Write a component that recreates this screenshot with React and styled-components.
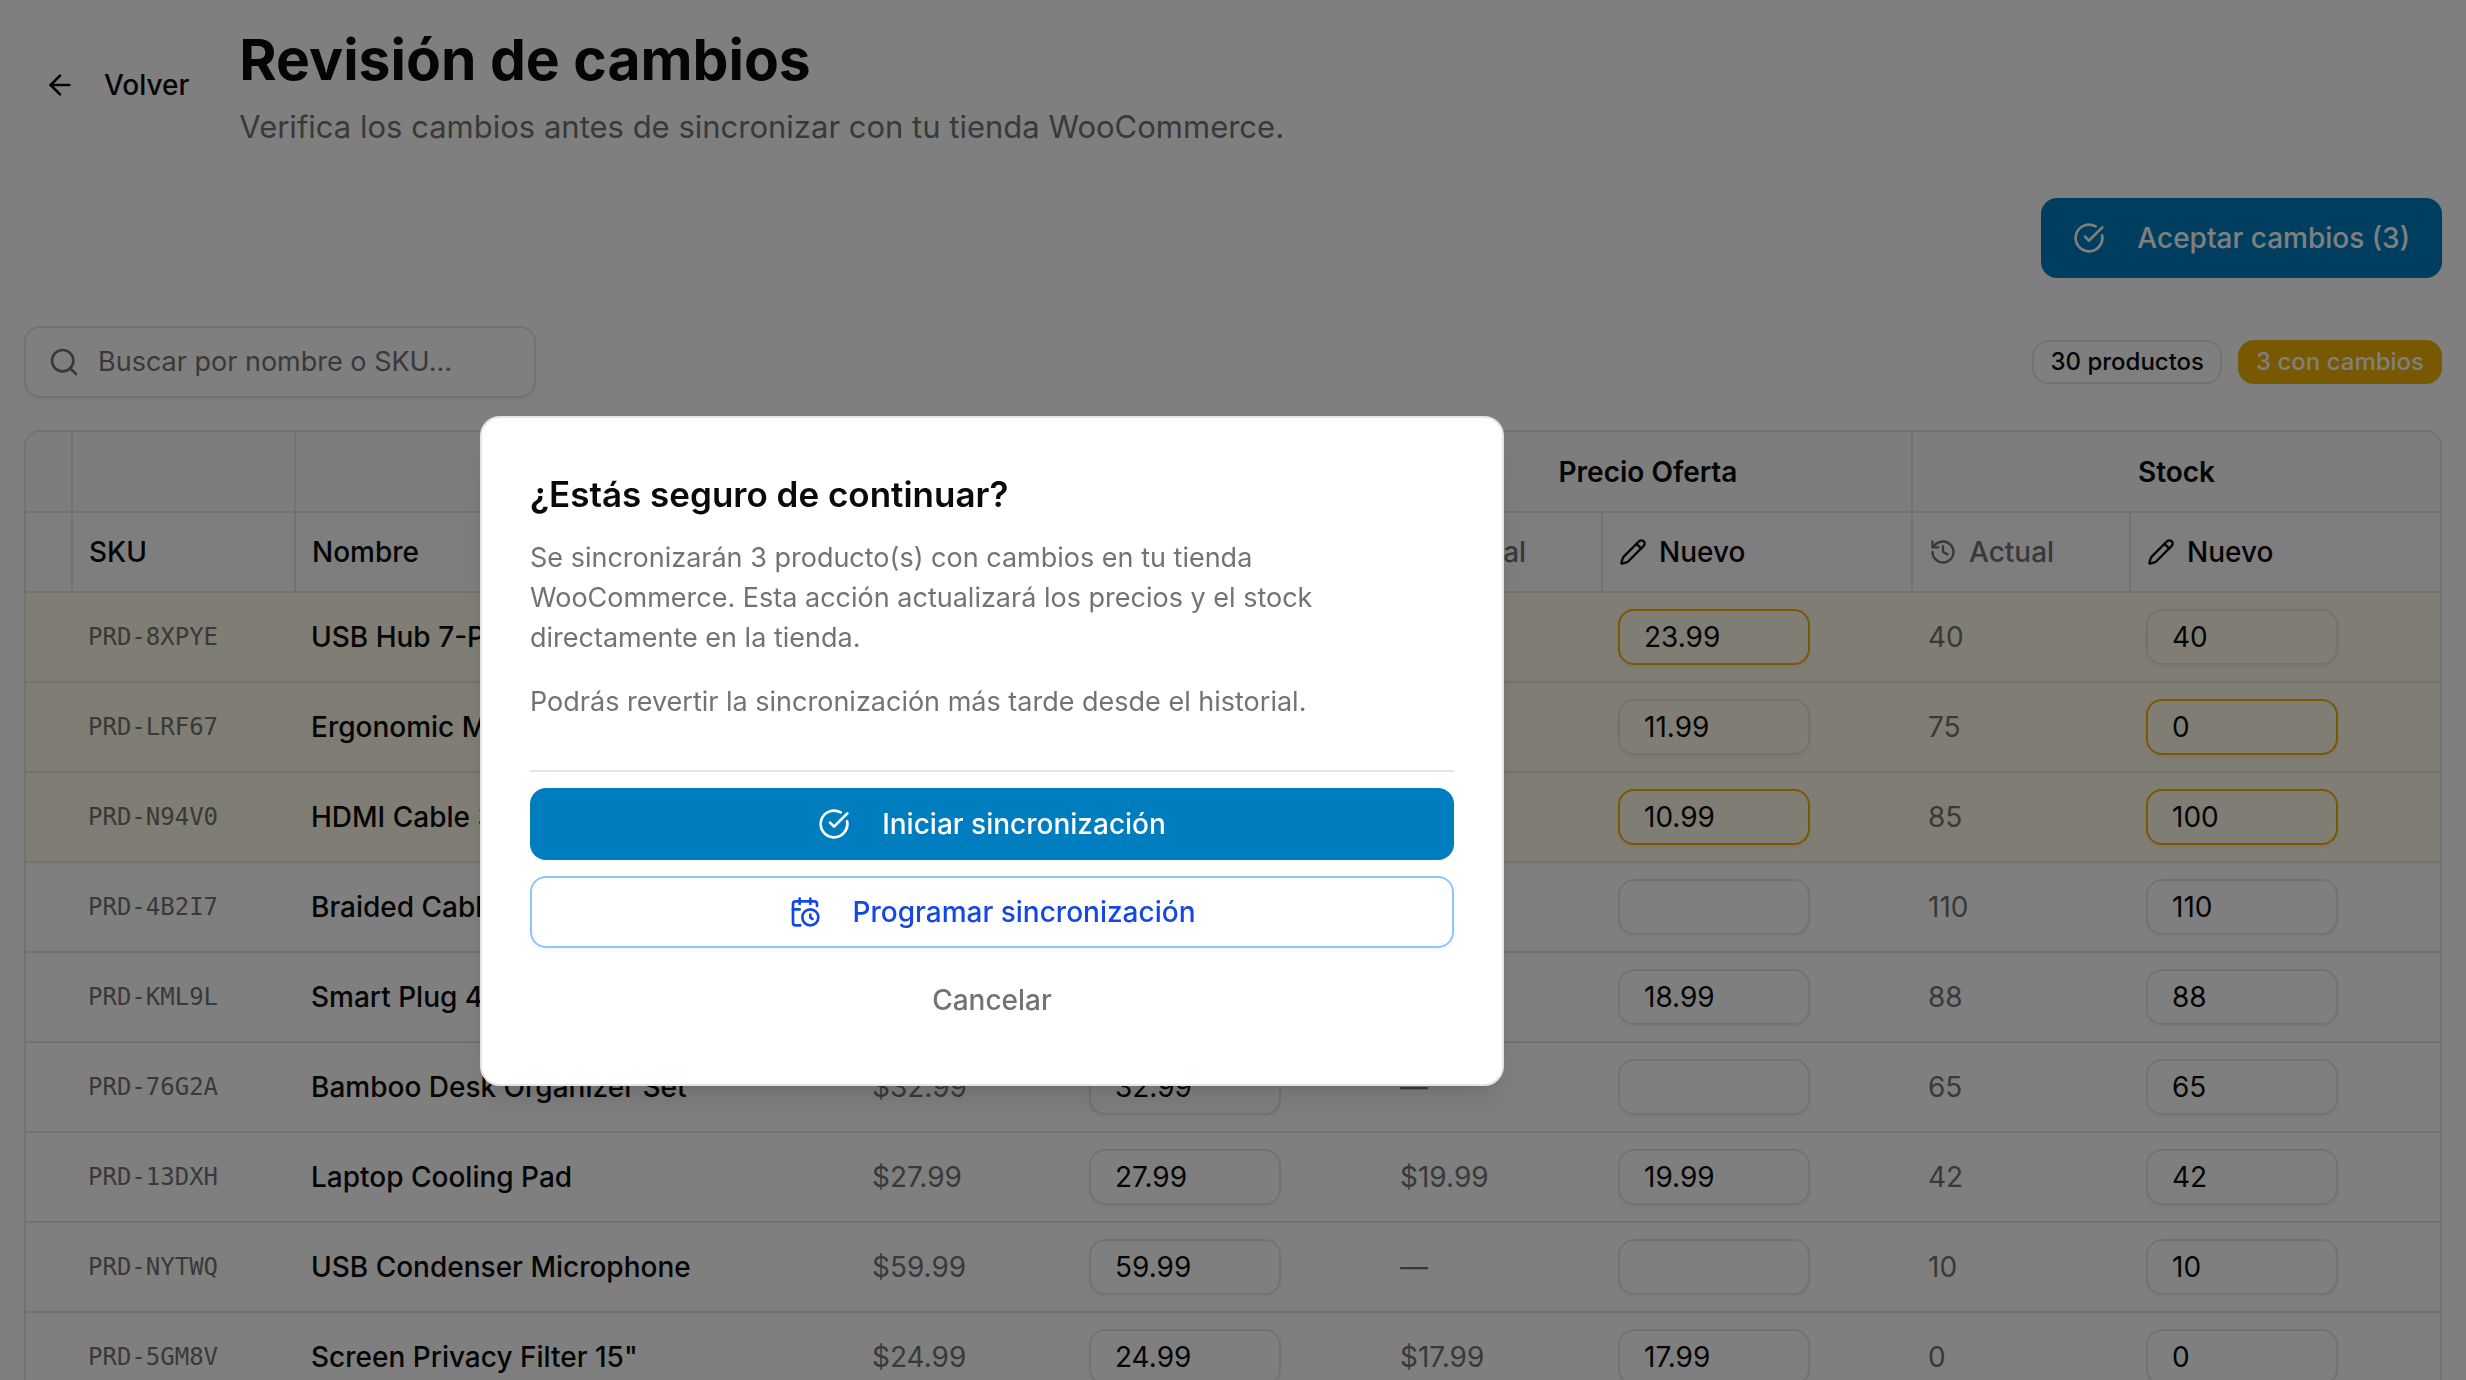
import styled, { createGlobalStyle, css } from 'styled-components';
import {
  ArrowLeft,
  CalendarClock,
  CircleCheckBig,
  History,
  Pencil,
  Search,
} from 'lucide-react';

const products = [
  { sku: 'PRD-8XPYE', name: 'USB Hub 7-Port', price: '34.99', newPrice: '34.99', offer: '24.99', newOffer: '23.99', stock: '40', newStock: '40' },
  { sku: 'PRD-LRF67', name: 'Ergonomic Mouse Pad', price: '14.99', newPrice: '14.99', offer: '11.99', newOffer: '11.99', stock: '75', newStock: '0' },
  { sku: 'PRD-N94V0', name: 'HDMI Cable 3m', price: '15.99', newPrice: '15.99', offer: '11.99', newOffer: '10.99', stock: '85', newStock: '100' },
  { sku: 'PRD-4B2I7', name: 'Braided Cable USB-C', price: '12.99', newPrice: '12.99', offer: '', newOffer: '', stock: '110', newStock: '110' },
  { sku: 'PRD-KML9L', name: 'Smart Plug 4-Pack', price: '24.99', newPrice: '24.99', offer: '18.99', newOffer: '18.99', stock: '88', newStock: '88' },
  { sku: 'PRD-76G2A', name: 'Bamboo Desk Organizer Set', price: '32.99', newPrice: '32.99', offer: '', newOffer: '', stock: '65', newStock: '65' },
  { sku: 'PRD-13DXH', name: 'Laptop Cooling Pad', price: '27.99', newPrice: '27.99', offer: '19.99', newOffer: '19.99', stock: '42', newStock: '42' },
  { sku: 'PRD-NYTWQ', name: 'USB Condenser Microphone', price: '59.99', newPrice: '59.99', offer: '', newOffer: '', stock: '10', newStock: '10' },
  { sku: 'PRD-5GM8V', name: 'Screen Privacy Filter 15"', price: '24.99', newPrice: '24.99', offer: '17.99', newOffer: '17.99', stock: '0', newStock: '0' },
];

const money = (value) => (value ? `$${value}` : '—');

function ColumnPair() {
  return (
    <>
      <HeadCell $muted>
        <HeadLabel>
          <History size={28} />
          Actual
        </HeadLabel>
      </HeadCell>
      <HeadCell>
        <HeadLabel>
          <Pencil size={28} />
          Nuevo
        </HeadLabel>
      </HeadCell>
    </>
  );
}

function ProductRow({ product }) {
  const priceChanged = product.price !== product.newPrice;
  const offerChanged = product.offer !== product.newOffer;
  const stockChanged = product.stock !== product.newStock;

  return (
    <Row $changed={priceChanged || offerChanged || stockChanged}>
      <Cell />
      <SkuCell>{product.sku}</SkuCell>
      <NameCell>{product.name}</NameCell>
      <MutedCell>{money(product.price)}</MutedCell>
      <Cell>
        <CellInput $changed={priceChanged} defaultValue={product.newPrice} aria-label={`Nuevo precio de ${product.name}`} />
      </Cell>
      <MutedCell>{money(product.offer)}</MutedCell>
      <Cell>
        <CellInput $changed={offerChanged} defaultValue={product.newOffer} aria-label={`Nueva oferta de ${product.name}`} />
      </Cell>
      <MutedCell>{product.stock}</MutedCell>
      <Cell>
        <CellInput $changed={stockChanged} defaultValue={product.newStock} aria-label={`Nuevo stock de ${product.name}`} />
      </Cell>
    </Row>
  );
}

export default function App() {
  return (
    <>
      <GlobalStyle />
      <Page>
        <Header>
          <BackButton type="button">
            <ArrowLeft size={32} />
            Volver
          </BackButton>
          <div>
            <Title>Revisión de cambios</Title>
            <Subtitle>
              Verifica los cambios antes de sincronizar con tu tienda WooCommerce.
            </Subtitle>
          </div>
        </Header>

        <Actions>
          <AcceptButton type="button">
            <CircleCheckBig size={32} />
            Aceptar cambios (3)
          </AcceptButton>
        </Actions>

        <Toolbar>
          <SearchBox>
            <Search size={32} />
            <SearchInput type="search" placeholder="Buscar por nombre o SKU..." aria-label="Buscar por nombre o SKU" />
          </SearchBox>
          <Badges>
            <Badge>30 productos</Badge>
            <Badge $warning>3 con cambios</Badge>
          </Badges>
        </Toolbar>

        <TableWrap>
          <Table>
            <colgroup>
              <Col $width={47} />
              <Col $width={223} />
              <col />
              <Col $width={217} />
              <Col $width={311} />
              <Col $width={218} />
              <Col $width={310} />
              <Col $width={218} />
              <Col $width={309} />
            </colgroup>
            <thead>
              <tr>
                <GroupCell />
                <GroupCell />
                <GroupCell />
                <GroupCell colSpan={2}>Precio Regular</GroupCell>
                <GroupCell colSpan={2}>Precio Oferta</GroupCell>
                <GroupCell colSpan={2}>Stock</GroupCell>
              </tr>
              <tr>
                <HeadCell />
                <HeadCell>SKU</HeadCell>
                <HeadCell>Nombre</HeadCell>
                <ColumnPair />
                <ColumnPair />
                <ColumnPair />
              </tr>
            </thead>
            <tbody>
              {products.map((product) => (
                <ProductRow key={product.sku} product={product} />
              ))}
            </tbody>
          </Table>
        </TableWrap>
      </Page>

      <Overlay>
        <Dialog role="alertdialog" aria-modal="true" aria-labelledby="dialog-title">
          <DialogTitle id="dialog-title">¿Estás seguro de continuar?</DialogTitle>
          <DialogText>
            <p>
              Se sincronizarán 3 producto(s) con cambios en tu tienda
              WooCommerce. Esta acción actualizará los precios y el stock
              directamente en la tienda.
            </p>
            <p>Podrás revertir la sincronización más tarde desde el historial.</p>
          </DialogText>
          <DialogFooter>
            <PrimaryButton type="button">
              <CircleCheckBig size={32} />
              Iniciar sincronización
            </PrimaryButton>
            <OutlineButton type="button">
              <CalendarClock size={32} />
              Programar sincronización
            </OutlineButton>
            <GhostButton type="button">Cancelar</GhostButton>
          </DialogFooter>
        </Dialog>
      </Overlay>
    </>
  );
}

const colors = {
  text: '#0a0a0a',
  muted: '#737373',
  border: '#e5e5e5',
  primary: '#007dbf',
  yellow: '#f0b100',
};

const GlobalStyle = createGlobalStyle`
  * {
    box-sizing: border-box;
  }
  body {
    margin: 0;
    background: #fff;
    color: ${colors.text};
    font-family: Inter, 'Liberation Sans', sans-serif;
    font-size: 28px;
    line-height: 40px;
  }
  h1, h2, p {
    margin: 0;
  }
  button, input {
    font: inherit;
    color: inherit;
  }
  svg {
    flex-shrink: 0;
  }
`

const Page = styled.main`
  display: flex;
  flex-direction: column;
  height: 100vh;
  padding: 20px 24px 0;
  overflow: hidden;
`

const Header = styled.header`
  display: flex;
  align-items: center;
  gap: 30px;
`

const Button = styled.button`
  display: inline-flex;
  align-items: center;
  justify-content: center;
  gap: 32px;
  height: 72px;
  padding: 0 32px;
  border: 0;
  border-radius: 16px;
  background: transparent;
  font-weight: 500;
  white-space: nowrap;
  cursor: pointer;
`

const BackButton = styled(Button)`
  gap: 28px;
  height: 64px;
  padding: 0 20px;
`

const Title = styled.h1`
  font-size: 57px;
  line-height: 80px;
  font-weight: 700;
`

const Subtitle = styled.p`
  margin-top: 4px;
  font-size: 31px;
  line-height: 46px;
  color: ${colors.muted};
`

const Actions = styled.div`
  display: flex;
  justify-content: flex-end;
  margin-top: 48px;
`

const PrimaryButton = styled(Button)`
  background: ${colors.primary};
  color: #fff;
`

const AcceptButton = styled(PrimaryButton)`
  height: 80px;
`

const Toolbar = styled.div`
  display: flex;
  align-items: center;
  justify-content: space-between;
  margin-top: 48px;
`

const SearchBox = styled.label`
  display: flex;
  align-items: center;
  gap: 18px;
  width: 512px;
  height: 72px;
  padding: 0 22px;
  border: 2px solid ${colors.border};
  border-radius: 16px;
  box-shadow: 0 2px 4px rgba(0, 0, 0, 0.05);
  color: ${colors.muted};
`

const SearchInput = styled.input`
  flex: 1;
  min-width: 0;
  padding: 0;
  border: 0;
  outline: 0;
  background: transparent;
  font-size: 27px;
  &::placeholder {
    color: ${colors.muted};
    opacity: 1;
  }
`

const Badges = styled.div`
  display: flex;
  gap: 16px;
`

const Badge = styled.span`
  height: 44px;
  padding: 4px 16px;
  border: 2px solid ${props => props.$warning ? colors.yellow : colors.border};
  border-radius: 16px;
  background: ${props => props.$warning ? colors.yellow : 'transparent'};
  color: ${props => props.$warning ? '#fff' : colors.text};
  font-size: 24px;
  line-height: 32px;
  font-weight: 500;
`

const TableWrap = styled.div`
  flex-shrink: 0;
  margin-top: 32px;
  border: 2px solid ${colors.border};
  border-radius: 16px;
  overflow: hidden;
`

const Table = styled.table`
  width: 100%;
  table-layout: fixed;
  border-collapse: separate;
  border-spacing: 0;
`

const Col = styled.col`
  width: ${props => props.$width}px;
`

const headBase = css`
  height: 80px;
  padding: 0 16px;
  border-right: 2px solid ${colors.border};
  border-bottom: 2px solid ${colors.border};
  white-space: nowrap;
  &:last-child {
    border-right: 0;
  }
`

const GroupCell = styled.th`
  ${headBase}
  height: 81px;
  background: #fafafa;
  font-weight: 600;
  text-align: center;
`

const HeadCell = styled.th`
  ${headBase}
  background: #fdfdfd;
  color: ${props => props.$muted ? colors.muted : colors.text};
  font-weight: 500;
  text-align: left;
`

const HeadLabel = styled.span`
  display: flex;
  align-items: center;
  gap: 12px;
`

const Row = styled.tr`
  background: ${props => props.$changed ? '#fefae8' : 'transparent'};
`

const Cell = styled.td`
  height: 90px;
  padding: 0 15px;
  border-bottom: 2px solid ${colors.border};
  white-space: nowrap;
`

const SkuCell = styled(Cell)`
  color: ${colors.muted};
  font-family: 'DejaVu Sans Mono', monospace;
  font-size: 24px;
`

const NameCell = styled(Cell)`
  font-weight: 500;
`

const MutedCell = styled(Cell)`
  color: ${colors.muted};
`

const CellInput = styled.input`
  display: block;
  width: 192px;
  height: 56px;
  padding: 0 24px;
  border: 2px solid ${props => props.$changed ? colors.yellow : colors.border};
  border-radius: 16px;
  background: transparent;
  box-shadow: 0 2px 4px rgba(0, 0, 0, 0.05);
`

const Overlay = styled.div`
  position: fixed;
  inset: 0;
  display: flex;
  align-items: flex-start;
  padding: 416px 0 0 480px;
  background: rgba(0, 0, 0, 0.5);
`

const Dialog = styled.section`
  width: 1024px;
  padding: 48px;
  border: 2px solid ${colors.border};
  border-radius: 20px;
  background: #fff;
  box-shadow: 0 20px 30px -6px rgba(0, 0, 0, 0.1), 0 8px 12px -8px rgba(0, 0, 0, 0.1);
`

const DialogTitle = styled.h2`
  font-size: 35px;
  line-height: 56px;
  font-weight: 600;
`

const DialogText = styled.div`
  display: grid;
  gap: 24px;
  margin-top: 16px;
  font-size: 27px;
  color: ${colors.muted};
`

const DialogFooter = styled.footer`
  display: flex;
  flex-direction: column;
  gap: 16px;
  margin-top: 48px;
  padding-top: 16px;
  border-top: 2px solid ${colors.border};
`

const OutlineButton = styled(Button)`
  border: 2px solid #8ec5ff;
  box-shadow: 0 2px 4px rgba(0, 0, 0, 0.05);
  color: #1447e6;
`

const GhostButton = styled(Button)`
  color: ${colors.muted};
`
